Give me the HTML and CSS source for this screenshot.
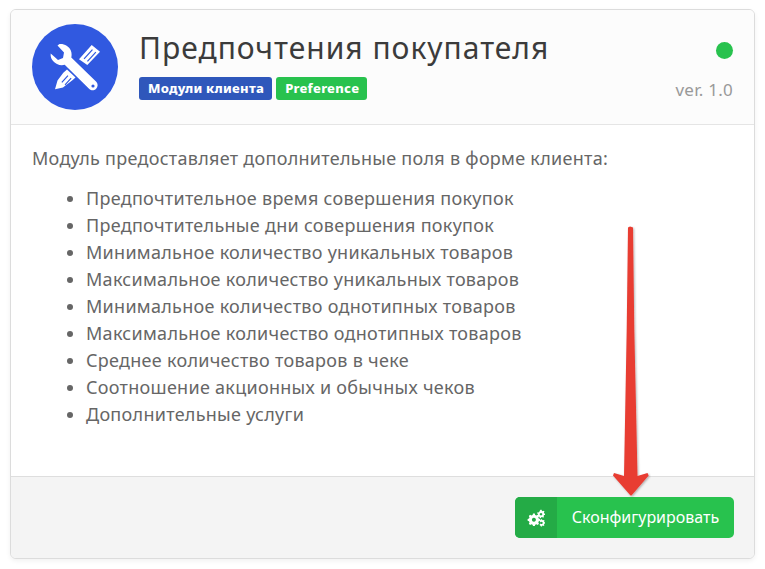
FILE: index.html
```html
<!DOCTYPE html>
<html lang="ru">
<head>
<meta charset="utf-8">
<title>Предпочтения покупателя</title>
<link rel="stylesheet" href="styles.css">
</head>
<body>
<div class="page">
  <article class="card">
    <header class="card-head">
      <div class="logo">
        <svg viewBox="0 0 86 86" width="86" height="86" aria-hidden="true">
          <circle cx="43" cy="43" r="43" fill="#3159e0"/>
          <g fill="#fff">
            <path d="M18.7 29.5 L26 36 L31 34 L32 28.5 L25.5 21.5 L27.5 20 C32 19.5 37 22 38.8 26.5 C39.8 29 39.8 31.5 39.3 33.5 L64.5 58 C66.2 60 66 63 64 65 C62 66.8 59 66.6 57.3 65 L32.7 40.7 C30.5 41.5 27.5 41.3 25 40 C20.5 37.5 18.2 34 18.7 29.5 Z"/>
            <path fill-rule="evenodd" d="M47 35.3 L59.7 21 L68 27.7 L55.3 41 Z M51.6 34.4 L60 25.2 L60.9 26 L52.5 35.2 Z M55 37 L63.4 27.8 L64.3 28.6 L55.9 37.8 Z"/>
            <path fill-rule="evenodd" d="M31.3 48.7 L35 45.5 L43.5 53.6 L40.7 56 L31 63.5 L23 65.3 L25.5 56.5 Z M29.4 58 L35.5 51.3 L36.4 52.1 L30.3 58.8 Z M32.6 60.4 L38.7 53.8 L39.6 54.6 L33.5 61.2 Z"/>
          </g>
          <circle cx="61" cy="62" r="1.6" fill="#3159e0"/>
        </svg>
      </div>
      <div class="head-main">
        <h1 class="title">Предпочтения покупателя</h1>
        <div class="tags">
          <span class="tag tag-blue">Модули клиента</span>
          <span class="tag tag-green">Preference</span>
        </div>
      </div>
      <div class="head-side">
        <span class="status"></span>
        <span class="version">ver. 1.0</span>
      </div>
    </header>
    <section class="card-body">
      <p class="intro">Модуль предоставляет дополнительные поля в форме клиента:</p>
      <ul class="features">
        <li>Предпочтительное время совершения покупок</li>
        <li>Предпочтительные дни совершения покупок</li>
        <li>Минимальное количество уникальных товаров</li>
        <li>Максимальное количество уникальных товаров</li>
        <li>Минимальное количество однотипных товаров</li>
        <li>Максимальное количество однотипных товаров</li>
        <li>Среднее количество товаров в чеке</li>
        <li>Соотношение акционных и обычных чеков</li>
        <li>Дополнительные услуги</li>
      </ul>
    </section>
    <footer class="card-foot">
      <button class="btn" type="button">
        <span class="btn-icon">
          <svg viewBox="0 0 18 18" width="18" height="18" aria-hidden="true">
            <g fill="#fff">
              <path fill-rule="evenodd" d="M6 4.6 L7.8 4.6 L8.2 6 L9.4 6.5 L10.7 5.8 L12 7.1 L11.3 8.4 L11.8 9.6 L13.2 10 L13.2 11.8 L11.8 12.2 L11.3 13.4 L12 14.7 L10.7 16 L9.4 15.3 L8.2 15.8 L7.8 17 L6 17 L5.6 15.8 L4.4 15.3 L3.1 16 L1.8 14.7 L2.5 13.4 L2 12.2 L0.6 11.8 L0.6 10 L2 9.6 L2.5 8.4 L1.8 7.1 L3.1 5.8 L4.4 6.5 L5.6 6 Z M6.9 8.8 A2 2 0 1 0 6.91 8.8 Z"/>
              <path fill-rule="evenodd" d="M13.4 0.8 L14.6 0.8 L14.9 1.8 L15.9 2.2 L16.8 1.7 L17.5 2.6 L16.9 3.5 L17.3 4.4 L18 4.7 L18 5.9 L17.1 6.1 L16.6 7 L17 8 L16 8.7 L15.2 8 L14.2 8.3 L13.8 9.2 L12.7 9 L12.6 8 L11.8 7.4 L10.8 7.7 L10.3 6.7 L11 6 L10.9 4.9 L10.1 4.3 L10.5 3.2 L11.5 3.4 L12.3 2.7 Z M14 3.9 A1.3 1.3 0 1 0 14.01 3.9 Z"/>
              <path fill-rule="evenodd" d="M14 10.2 L15 10.2 L15.3 11 L16.1 11.3 L16.9 10.9 L17.5 11.6 L17.1 12.4 L17.4 13.1 L18 13.4 L18 14.4 L17.3 14.7 L17 15.4 L17.4 16.2 L16.7 16.9 L15.9 16.5 L15.2 16.8 L14.9 17.6 L13.9 17.6 L13.6 16.8 L12.9 16.5 L12.7 15 L13.5 14.4 L13.5 13.3 L12.8 12.2 L12.9 11.2 L13.7 11 Z M14.5 12.7 A1.2 1.2 0 1 0 14.51 12.7 Z"/>
            </g>
          </svg>
        </span>
        <span class="btn-label">Сконфигурировать</span>
      </button>
    </footer>
  </article>
  <svg class="arrow" viewBox="0 0 40 275" width="40" height="275" aria-hidden="true">
    <defs>
      <filter id="arrow-shadow" x="-30%" y="-5%" width="160%" height="110%">
        <feDropShadow dx="1" dy="1" stdDeviation="1" flood-color="#000" flood-opacity=".3"/>
      </filter>
    </defs>
    <path filter="url(#arrow-shadow)" fill="#e83c33" d="M17 1.5 L19 .5 L22 1.5 L23.3 104 L26.5 250 L36.5 247 L37.7 249.5 L20.5 269.5 L19.5 269.5 L2 249.5 L3 247 L13 250 L15.7 104 Z"/>
  </svg>
</div>
</body>
</html>
```
FILE: styles.css
```css
* { box-sizing: border-box; }
html, body { margin: 0; padding: 0; background: #fff; }
body { font-family: "Noto Sans", "Open Sans", sans-serif; color: #666; }
.page { position: relative; width: 765px; height: 569px; padding: 9px 10px 10px; overflow: hidden; }
.card {
  width: 745px; height: 550px; display: flex; flex-direction: column;
  background: #fff; border: 1px solid #dcdcdc; border-radius: 6px;
  box-shadow: 0 2px 5px rgba(0,0,0,.06); overflow: hidden;
}
.card-head {
  height: 115px; flex: none; display: flex; padding: 14px 21px 0 21px;
  background: #fcfcfc; border-bottom: 1px solid #e5e5e5;
}
.logo { width: 86px; height: 86px; flex: none; }
.logo svg { display: block; }
.head-main { flex: 1; padding: 3px 0 0 21px; }
.title {
  margin: 0; font-size: 30px; line-height: 41px; font-weight: 400; color: #3b3b3b;
  letter-spacing: 1px;
}
.tags { display: flex; gap: 4px; margin-top: 9px; }
.tag {
  height: 23px; line-height: 22px; padding: 0 8px 0 9px; border-radius: 3px;
  color: #fff; font-size: 13px; font-weight: 800; white-space: nowrap; letter-spacing: .25px;
}
.tag-blue { background: #2f57bb; }
.tag-green { background: #28c24e; }
.head-side { display: flex; flex-direction: column; align-items: flex-end; padding-top: 18px; }
.status { width: 17px; height: 17px; border-radius: 50%; background: #28c24e; }
.version { margin-top: 20px; font-size: 17px; line-height: 22px; color: #999; letter-spacing: .25px; }
.card-body { flex: 1; padding: 20px 21px 0; font-size: 18px; line-height: 27px; letter-spacing: .28px; }
.intro { margin: 0 0 13px; }
.features { margin: 0; padding: 0 0 0 54px; }
.card-foot {
  height: 82px; flex: none; display: flex; justify-content: flex-end; align-items: flex-start;
  padding: 20px 20px 0; background: #f4f4f4; border-top: 1px solid #dedede;
}
.btn {
  display: flex; height: 41px; padding: 0; border: 0; border-radius: 5px; overflow: hidden;
  background: #28c24e; color: #fff; font-family: inherit; font-size: 16px;
}
.btn-icon { width: 42px; height: 41px; display: flex; align-items: center; justify-content: center; background: #24ab46; }
.btn-label { width: 177px; line-height: 40px; text-align: center; }
.arrow { position: absolute; left: 611px; top: 226px; }
```
